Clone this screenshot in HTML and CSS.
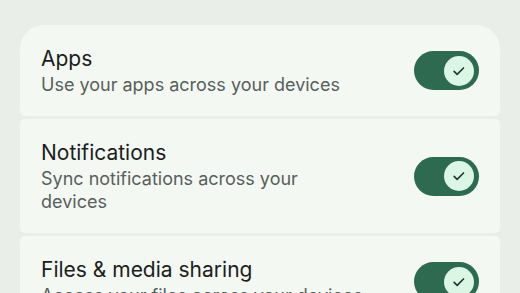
FILE: index.html
```html
<!DOCTYPE html>
<html>
<head>
<meta charset="utf-8">
<link rel="stylesheet" href="styles.css">
</head>
<body>
<div class="list">
  <div class="card first">
    <div class="text">
      <div class="title">Apps</div>
      <div class="sub">Use your apps across your devices</div>
    </div>
    <div class="switch"><div class="thumb"><svg viewBox="0 0 24 24" width="18" height="18"><path d="M5.5 12.5l4 4 8.5-8.5" fill="none" stroke="#1d3a2b" stroke-width="2.2" stroke-linecap="round" stroke-linejoin="round"/></svg></div></div>
  </div>
  <div class="card">
    <div class="text">
      <div class="title">Notifications</div>
      <div class="sub">Sync notifications across your devices</div>
    </div>
    <div class="switch"><div class="thumb"><svg viewBox="0 0 24 24" width="18" height="18"><path d="M5.5 12.5l4 4 8.5-8.5" fill="none" stroke="#1d3a2b" stroke-width="2.2" stroke-linecap="round" stroke-linejoin="round"/></svg></div></div>
  </div>
  <div class="card">
    <div class="text">
      <div class="title">Files &amp; media sharing</div>
      <div class="sub">Access your files across your devices</div>
    </div>
    <div class="switch"><div class="thumb"><svg viewBox="0 0 24 24" width="18" height="18"><path d="M5.5 12.5l4 4 8.5-8.5" fill="none" stroke="#1d3a2b" stroke-width="2.2" stroke-linecap="round" stroke-linejoin="round"/></svg></div></div>
  </div>
</div>
</body>
</html>
```
FILE: styles.css
```css
html, body {
  margin: 0;
  padding: 0;
  background: #e9eee9;
  font-family: "Inter", "Liberation Sans", sans-serif;
  overflow: hidden;
}
.list {
  padding: 25px 20px 0 20px;
  display: flex;
  flex-direction: column;
  gap: 3px;
}
.card {
  background: #f3f8f3;
  border-radius: 5px;
  padding: 20px 21px 20px 21px;
  display: flex;
  align-items: center;
  justify-content: space-between;
}
.card.first {
  border-radius: 24px 24px 5px 5px;
}
.text {
  max-width: 325px;
}
.title {
  font-size: 21px;
  line-height: 28px;
  color: #1b1e1c;
}
.sub {
  font-size: 18px;
  line-height: 23px;
  color: #595f5b;
}
.switch {
  width: 65px;
  height: 39px;
  border-radius: 20px;
  background: #2d6a4f;
  display: flex;
  align-items: center;
  justify-content: flex-end;
  padding-right: 5px;
  box-sizing: border-box;
  flex-shrink: 0;
}
.thumb {
  width: 30px;
  height: 30px;
  border-radius: 50%;
  background: #dbf6e5;
  display: flex;
  align-items: center;
  justify-content: center;
}
```
